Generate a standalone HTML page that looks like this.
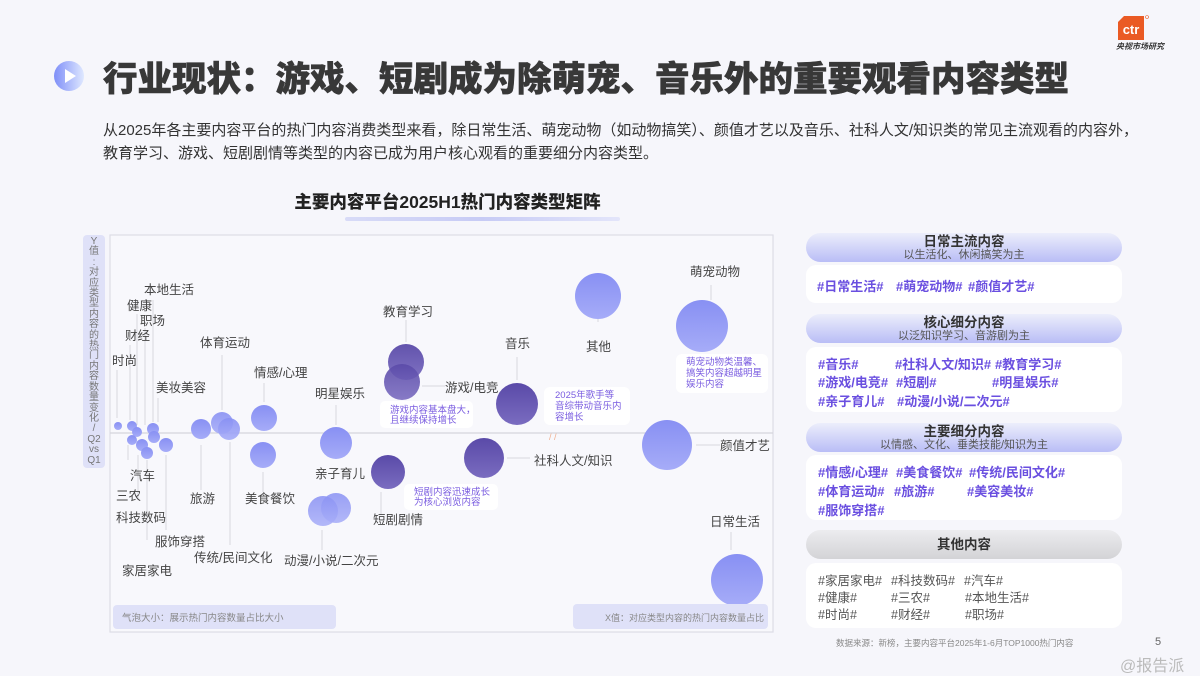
<!DOCTYPE html>
<html><head><meta charset="utf-8"><style>
*{margin:0;padding:0;box-sizing:border-box}
body{width:1200px;height:675px;background:#f6f6fb;font-family:"Liberation Sans","Noto Sans CJK SC",sans-serif;position:relative;overflow:hidden;color:#333}
.abs{position:absolute}
.title{left:103px;top:51px;font-size:34.5px;font-weight:900;color:#383838;white-space:nowrap;-webkit-text-stroke:0.6px #383838}
.para{left:103px;top:119px;font-size:15px;line-height:23px;color:#333;white-space:nowrap}
.ct{left:0;width:895px;top:189px;text-align:center;font-size:17.5px;font-weight:900;color:#222}
.hd{left:806px;width:316px;height:29px;border-radius:15px;background:linear-gradient(180deg,#eceefb,#b9bdf6);text-align:center;color:#333}
.hd b{display:block;font-size:13.5px;line-height:15px;padding-top:1px}
.hd span{display:block;font-size:11px;line-height:12px;color:#555}
.bx{left:806px;width:316px;background:#fff;border-radius:10px;font-size:13px;font-weight:700;color:#6a4fe0}
.bx div{position:absolute;white-space:nowrap}
</style></head><body>
<svg class="abs" style="left:1116px;top:14px" width="34" height="28"><path d="M8 2H28V26H2V8Z" fill="#ea5a24"/><text x="15" y="20" font-size="13" font-weight="700" fill="#fff" text-anchor="middle" font-family="Liberation Sans">ctr</text><circle cx="31" cy="3" r="1.5" fill="none" stroke="#ea5a24" stroke-width="0.6"/></svg>
<div class="abs" style="left:1116px;top:41px;font-size:8px;font-weight:700;color:#333;font-style:italic;white-space:nowrap">央视市场研究</div>
<svg class="abs" style="left:53px;top:60px" width="32" height="32"><defs><linearGradient id="ig" x1="0" x2="1"><stop offset="0" stop-color="#7f8ff8"/><stop offset="1" stop-color="#dfe8ff"/></linearGradient></defs><circle cx="16" cy="16" r="15" fill="url(#ig)"/><path d="M12 9L23 16L12 23Z" fill="#fff"/></svg>
<div class="abs title">行业现状：游戏、短剧成为除萌宠、音乐外的重要观看内容类型</div>
<div class="abs para">从2025年各主要内容平台的热门内容消费类型来看，除日常生活、萌宠动物（如动物搞笑）、颜值才艺以及音乐、社科人文/知识类的常见主流观看的内容外，<br>教育学习、游戏、短剧剧情等类型的内容已成为用户核心观看的重要细分内容类型。</div>
<div class="abs ct">主要内容平台2025H1热门内容类型矩阵</div>
<div class="abs" style="left:345px;top:217px;width:275px;height:4px;border-radius:2px;background:linear-gradient(90deg,#d8dbf7,#c7cbf5,#e3e5fa)"></div>
<div class="abs" style="left:83px;top:235px;width:22px;height:233px;background:#dfe1f8;border-radius:4px;font-size:10px;color:#777;text-align:center;line-height:10.4px;padding-top:2px">Y<br>值<br>:<br>对<br>应<br>类<br>型<br>内<br>容<br>的<br>热<br>门<br>内<br>容<br>数<br>量<br>变<br>化<br>/<br>Q2<br>vs<br>Q1</div>
<svg class="abs" style="left:0;top:0" width="800" height="675" font-family="Liberation Sans,Noto Sans CJK SC,sans-serif">
<defs>
<linearGradient id="lb" x1="0" y1="0" x2="0" y2="1"><stop offset="0" stop-color="#8890f3"/><stop offset="1" stop-color="#a6acf8"/></linearGradient>
<linearGradient id="db" x1="0" y1="0" x2="0" y2="1"><stop offset="0" stop-color="#5a4aa8"/><stop offset="1" stop-color="#7a6cc0"/></linearGradient>
</defs>
<rect x="110" y="235" width="663" height="397" fill="#f8f8fc" stroke="#dddde6" stroke-width="1.2"/>
<line x1="110" y1="433" x2="773" y2="433" stroke="#d5d5dc" stroke-width="1.2"/>
<g stroke="#d8d8de" stroke-width="1">
<line x1="117" y1="370" x2="117" y2="418"/><line x1="130" y1="345" x2="130" y2="420"/><line x1="137" y1="314" x2="137" y2="425"/><line x1="145" y1="328" x2="145" y2="425"/><line x1="153" y1="300" x2="153" y2="422"/>
<line x1="158" y1="398" x2="158" y2="422"/><line x1="222" y1="355" x2="222" y2="410"/><line x1="264" y1="383" x2="264" y2="402"/><line x1="336" y1="405" x2="336" y2="425"/>
<line x1="406" y1="320" x2="406" y2="342"/><line x1="422" y1="386" x2="445" y2="386"/><line x1="517" y1="357" x2="517" y2="380"/><line x1="598" y1="318" x2="598" y2="322"/><line x1="711" y1="285" x2="711" y2="300"/>
<line x1="696" y1="445" x2="720" y2="445"/><line x1="507" y1="458" x2="530" y2="458"/><line x1="731" y1="532" x2="731" y2="550"/>
<line x1="128" y1="445" x2="128" y2="460"/><line x1="138" y1="455" x2="138" y2="500"/><line x1="147" y1="460" x2="147" y2="540"/><line x1="166" y1="455" x2="166" y2="530"/>
<line x1="201" y1="445" x2="201" y2="490"/><line x1="230" y1="442" x2="230" y2="545"/><line x1="263" y1="472" x2="263" y2="492"/>
<line x1="322" y1="530" x2="322" y2="550"/><line x1="381" y1="492" x2="381" y2="515"/>
</g>
<g fill="url(#lb)">
<circle cx="118" cy="426" r="4"/><circle cx="132" cy="426" r="5"/><circle cx="137" cy="432" r="5"/><circle cx="132" cy="440" r="5"/><circle cx="142" cy="445" r="6"/><circle cx="147" cy="453" r="6"/><circle cx="153" cy="429" r="6"/><circle cx="154" cy="437" r="6"/><circle cx="166" cy="445" r="7"/>
<circle cx="201" cy="429" r="10"/><circle cx="222" cy="423" r="11" opacity=".9"/><circle cx="229" cy="429" r="11" opacity=".9"/>
<circle cx="264" cy="418" r="13"/><circle cx="263" cy="455" r="13"/><circle cx="336" cy="443" r="16"/>
<circle cx="323" cy="511" r="15" opacity=".85"/><circle cx="336" cy="508" r="15" opacity=".85"/>
<circle cx="598" cy="296" r="23"/><circle cx="702" cy="326" r="26"/><circle cx="667" cy="445" r="25"/><circle cx="737" cy="580" r="26"/>
</g>
<g fill="url(#db)">
<circle cx="388" cy="472" r="17"/><circle cx="406" cy="362" r="18" opacity=".95"/><circle cx="402" cy="382" r="18" opacity=".9"/><circle cx="484" cy="458" r="20"/><circle cx="517" cy="404" r="21"/>
</g>
<g font-size="12.5" fill="#444">
<text x="144" y="294">本地生活</text><text x="127" y="310">健康</text><text x="140" y="325">职场</text><text x="125" y="340">财经</text><text x="112" y="365">时尚</text>
<text x="200" y="347">体育运动</text><text x="156" y="392">美妆美容</text><text x="254" y="377">情感/心理</text><text x="315" y="398">明星娱乐</text>
<text x="383" y="316">教育学习</text><text x="445" y="392">游戏/电竞</text><text x="505" y="348">音乐</text><text x="586" y="351">其他</text><text x="690" y="276">萌宠动物</text>
<text x="720" y="450">颜值才艺</text><text x="534" y="465">社科人文/知识</text><text x="710" y="526">日常生活</text>
<text x="130" y="480">汽车</text><text x="116" y="500">三农</text><text x="116" y="522">科技数码</text><text x="155" y="546">服饰穿搭</text><text x="122" y="575">家居家电</text>
<text x="190" y="503">旅游</text><text x="245" y="503">美食餐饮</text><text x="194" y="562">传统/民间文化</text><text x="315" y="478">亲子育儿</text><text x="284" y="565">动漫/小说/二次元</text><text x="373" y="524">短剧剧情</text>
</g>
<g fill="#fff"><rect x="380" y="401" width="93" height="27" rx="5"/><rect x="544" y="387" width="86" height="38" rx="6"/><rect x="676" y="354" width="92" height="39" rx="6"/><rect x="404" y="484" width="94" height="26" rx="5"/></g>
<g font-size="9.5" fill="#7a5ce0">
<text x="390" y="413">游戏内容基本盘大，</text><text x="390" y="423">且继续保持增长</text>
<text x="555" y="398">2025年歌手等</text><text x="555" y="409">音综带动音乐内</text><text x="555" y="420">容增长</text>
<text x="686" y="365">萌宠动物类温馨、</text><text x="686" y="376">搞笑内容超越明星</text><text x="686" y="387">娱乐内容</text>
<text x="414" y="495">短剧内容迅速成长</text><text x="414" y="505">为核心浏览内容</text>
</g>
<text x="549" y="440" font-size="9" fill="#f0b090">/ /</text>
<rect x="113" y="605" width="223" height="24" rx="4" fill="#dfe1f8"/><text x="122" y="621" font-size="9.5" fill="#888">气泡大小：展示热门内容数量占比大小</text>
<rect x="573" y="604" width="195" height="25" rx="4" fill="#dfe1f8"/><text x="605" y="621" font-size="9" fill="#888">X值：对应类型内容的热门内容数量占比</text>
</svg>
<div class="abs hd" style="top:233px"><b>日常主流内容</b><span>以生活化、休闲搞笑为主</span></div>
<div class="abs bx" style="top:265px;height:38px"><div style="left:11px;top:11px">#日常生活#</div><div style="left:90px;top:11px">#萌宠动物#</div><div style="left:162px;top:11px">#颜值才艺#</div></div>
<div class="abs hd" style="top:314px"><b>核心细分内容</b><span>以泛知识学习、音游剧为主</span></div>
<div class="abs bx" style="top:347px;height:65px"><div style="left:12px;top:7px">#音乐#</div><div style="left:89px;top:7px">#社科人文/知识#</div><div style="left:189px;top:7px">#教育学习#</div>
<div style="left:12px;top:25px">#游戏/电竞#</div><div style="left:90px;top:25px">#短剧#</div><div style="left:186px;top:25px">#明星娱乐#</div>
<div style="left:12px;top:44px">#亲子育儿#</div><div style="left:91px;top:44px">#动漫/小说/二次元#</div></div>
<div class="abs hd" style="top:423px"><b>主要细分内容</b><span>以情感、文化、垂类技能/知识为主</span></div>
<div class="abs bx" style="top:455px;height:65px"><div style="left:12px;top:7px">#情感/心理#</div><div style="left:90px;top:7px">#美食餐饮#</div><div style="left:163px;top:7px">#传统/民间文化#</div>
<div style="left:12px;top:26px">#体育运动#</div><div style="left:88px;top:26px">#旅游#</div><div style="left:161px;top:26px">#美容美妆#</div>
<div style="left:12px;top:45px">#服饰穿搭#</div></div>
<div class="abs hd" style="top:530px;background:linear-gradient(180deg,#ececef,#d3d3d6)"><b style="padding-top:7px">其他内容</b></div>
<div class="abs bx" style="top:563px;height:65px;font-weight:400;color:#555;font-size:12.5px"><div style="left:12px;top:7px">#家居家电#</div><div style="left:85px;top:7px">#科技数码#</div><div style="left:158px;top:7px">#汽车#</div>
<div style="left:12px;top:24px">#健康#</div><div style="left:85px;top:24px">#三农#</div><div style="left:159px;top:24px">#本地生活#</div>
<div style="left:12px;top:41px">#时尚#</div><div style="left:85px;top:41px">#财经#</div><div style="left:159px;top:41px">#职场#</div></div>
<div class="abs" style="left:836px;top:637px;font-size:8.5px;color:#888;white-space:nowrap">数据来源：新榜，主要内容平台2025年1-6月TOP1000热门内容</div>
<div class="abs" style="left:1155px;top:636px;font-size:11px;color:#666">5</div>
<div class="abs" style="left:1120px;top:652px;font-size:16px;color:#bbb;white-space:nowrap">@报告派</div>
</body></html>
